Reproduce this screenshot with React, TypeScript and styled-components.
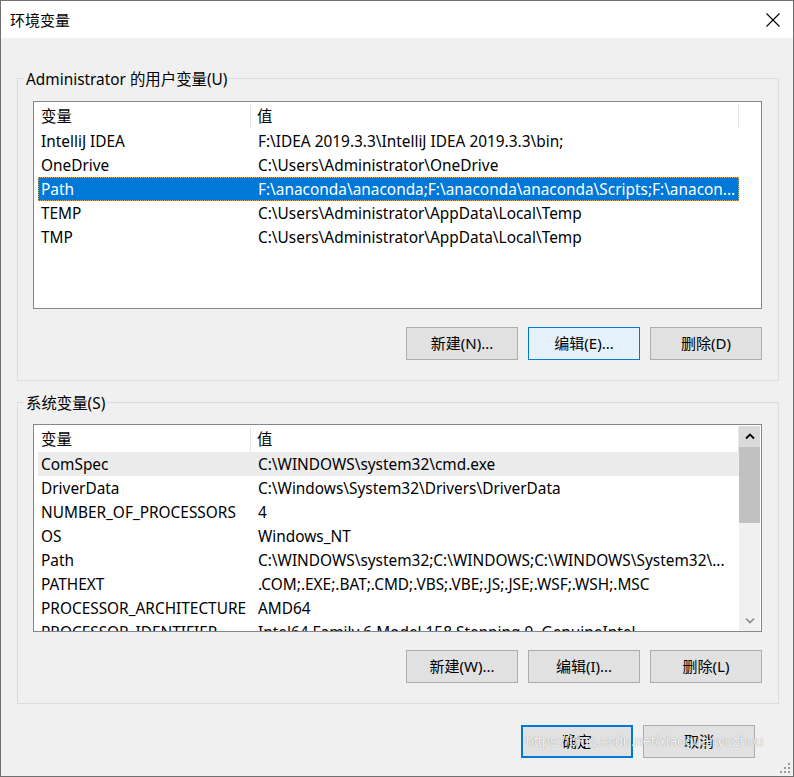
import React from "react";
import styled, { createGlobalStyle } from "styled-components";

const FONT = `"Noto Sans", "Noto Sans CJK SC", sans-serif`;

const Global = createGlobalStyle`
  html, body { margin: 0; padding: 0; background: #f0f0f0; }
  body { font-family: ${FONT}; color: #000; }
  * { box-sizing: border-box; }
`;

const Window = styled.div`
  position: relative;
  width: 794px;
  height: 777px;
  border: 1px solid #707070;
  background: #f0f0f0;
  display: flex;
  flex-direction: column;
  overflow: hidden;
  font-size: 15.4px;
`;

const TitleBar = styled.div`
  height: 37px;
  flex: none;
  background: #fff;
  display: flex;
  align-items: center;
  justify-content: space-between;
  padding: 0 13px 0 9px;
  font-size: 15px;
`;

const Title = styled.span`
  line-height: 20px;
`;

const Body = styled.div`
  display: flex;
  flex-direction: column;
  padding: 0 14px 0 16px;
`;

const Group = styled.fieldset<{ $top: number; $padTop: number }>`
  margin: ${(p) => p.$top}px 0 0 0;
  min-width: 0;
  border: 1px solid #dcdcdc;
  padding: ${(p) => p.$padTop}px 16px 20px 15px;
  display: flex;
  flex-direction: column;
`;

const Legend = styled.legend`
  margin-left: -9px;
  padding: 0 2px;
  line-height: 23px;
  height: 20px;
  font-size: 15.4px;
`;

const ListBox = styled.div<{ $height: number }>`
  height: ${(p) => p.$height}px;
  border: 1px solid #828790;
  background: #fff;
  display: flex;
  overflow: hidden;
`;

const Table = styled.div`
  width: 705px;
  flex: none;
  padding-left: 4px;
  display: flex;
  flex-direction: column;
`;

const HeaderRow = styled.div`
  height: 27px;
  flex: none;
  display: flex;
  align-items: stretch;
  padding-top: 2px;
`;

const HeaderCell = styled.div<{ $w: number; $pl: number }>`
  width: ${(p) => p.$w}px;
  padding-left: ${(p) => p.$pl}px;
  border-right: 1px solid #e5e5e5;
  display: flex;
  align-items: center;
  line-height: 20px;
`;

const Row = styled.div<{ $state?: "selected" | "hover" }>`
  height: 24px;
  flex: none;
  display: flex;
  align-items: center;
  padding-top: 1px;
  white-space: nowrap;
  background: ${(p) =>
    p.$state === "selected" ? "#0078d7" : p.$state === "hover" ? "#ececec" : "transparent"};
  color: ${(p) => (p.$state === "selected" ? "#fff" : "#000")};
  border: 1px dotted ${(p) => (p.$state === "selected" ? "#e8a040" : "transparent")};
`;

const Cell = styled.div<{ $w: number; $pl: number }>`
  width: ${(p) => p.$w}px;
  padding-left: ${(p) => p.$pl}px;
  overflow: hidden;
  white-space: nowrap;
  line-height: 20px;
  flex: none;
`;

const ScrollBar = styled.div`
  width: 21px;
  flex: none;
  margin: 1px 1px 0 0;
  background: #f0f0f0;
  display: flex;
  flex-direction: column;
`;

const ScrollArrow = styled.div<{ $dark?: boolean }>`
  height: 21px;
  flex: none;
  display: flex;
  align-items: center;
  justify-content: center;
  background: ${(p) => (p.$dark ? "#dadada" : "#f0f0f0")};
`;

const ScrollTrack = styled.div`
  flex: 1;
  display: flex;
  flex-direction: column;
`;

const Thumb = styled.div`
  height: 76px;
  background: #c1c1c1;
`;

const ButtonRow = styled.div<{ $mt: number; $pr?: number }>`
  display: flex;
  justify-content: flex-end;
  gap: 10px;
  margin-top: ${(p) => p.$mt}px;
  padding-right: ${(p) => p.$pr ?? 0}px;
`;

const Button = styled.button<{ $variant?: "hot" | "default" }>`
  width: 112px;
  height: 33px;
  font-family: ${FONT};
  font-size: 15px;
  color: #000;
  padding: 0 0 2px 0;
  background: ${(p) => (p.$variant === "hot" ? "#e5f1fb" : "#e1e1e1")};
  border: ${(p) =>
    p.$variant === "hot"
      ? "1px solid #0078d7"
      : p.$variant === "default"
      ? "2px solid #0078d7"
      : "1px solid #adadad"};
  line-height: 20px;
`;

const Watermark = styled.div`
  position: absolute;
  left: 525px;
  top: 732px;
  font-family: "Liberation Sans", Arial, sans-serif;
  font-size: 14.4px;
  color: rgba(255, 255, 255, 0.92);
  text-shadow: 0 0 1px rgba(0, 0, 0, 0.45);
  pointer-events: none;
  white-space: nowrap;
`;

const Grip = styled.svg`
  position: absolute;
  right: 3px;
  bottom: 3px;
`;

type Item = { name: string; value: string; state?: "selected" | "hover" };

const userVars: Item[] = [
  { name: "IntelliJ IDEA", value: "F:\\IDEA 2019.3.3\\IntelliJ IDEA 2019.3.3\\bin;" },
  { name: "OneDrive", value: "C:\\Users\\Administrator\\OneDrive" },
  {
    name: "Path",
    value: "F:\\anaconda\\anaconda;F:\\anaconda\\anaconda\\Scripts;F:\\anacon...",
    state: "selected",
  },
  { name: "TEMP", value: "C:\\Users\\Administrator\\AppData\\Local\\Temp" },
  { name: "TMP", value: "C:\\Users\\Administrator\\AppData\\Local\\Temp" },
];

const sysVars: Item[] = [
  { name: "ComSpec", value: "C:\\WINDOWS\\system32\\cmd.exe", state: "hover" },
  { name: "DriverData", value: "C:\\Windows\\System32\\Drivers\\DriverData" },
  { name: "NUMBER_OF_PROCESSORS", value: "4" },
  { name: "OS", value: "Windows_NT" },
  { name: "Path", value: "C:\\WINDOWS\\system32;C:\\WINDOWS;C:\\WINDOWS\\System32\\..." },
  { name: "PATHEXT", value: ".COM;.EXE;.BAT;.CMD;.VBS;.VBE;.JS;.JSE;.WSF;.WSH;.MSC" },
  { name: "PROCESSOR_ARCHITECTURE", value: "AMD64" },
  { name: "PROCESSOR_IDENTIFIER", value: "Intel64 Family 6 Model 158 Stepping 9, GenuineIntel" },
];

const VarTable: React.FC<{ items: Item[] }> = ({ items }) => (
  <Table>
    <HeaderRow>
      <HeaderCell $w={213} $pl={3}>变量</HeaderCell>
      <HeaderCell $w={488} $pl={6}>值</HeaderCell>
    </HeaderRow>
    {items.map((it, i) => (
      <Row key={i} $state={it.state}>
        <Cell $w={212} $pl={2}>{it.name}</Cell>
        <Cell $w={487} $pl={7}>{it.value}</Cell>
      </Row>
    ))}
  </Table>
);

const CloseIcon = () => (
  <svg width="14" height="14" viewBox="0 0 14 14">
    <path d="M0.5 0.5 L13.5 13.5 M13.5 0.5 L0.5 13.5" stroke="#000" strokeWidth="1.1" fill="none" />
  </svg>
);

const UpChevron = () => (
  <svg width="10" height="7" viewBox="0 0 10 7">
    <path d="M1 5.5 L5 1.5 L9 5.5" stroke="#000" strokeWidth="1.8" fill="none" />
  </svg>
);

const DownChevron = () => (
  <svg width="10" height="7" viewBox="0 0 10 7">
    <path d="M1 1.5 L5 5.5 L9 1.5" stroke="#8a8a8a" strokeWidth="1.6" fill="none" />
  </svg>
);

export default function App() {
  return (
    <>
      <Global />
      <Window>
        <TitleBar>
          <Title>环境变量</Title>
          <CloseIcon />
        </TitleBar>
        <Body>
          <Group $top={30} $padTop={13}>
            <Legend>Administrator 的用户变量(U)</Legend>
            <ListBox $height={208}>
              <VarTable items={userVars} />
            </ListBox>
            <ButtonRow $mt={18}>
              <Button>新建(N)...</Button>
              <Button $variant="hot">编辑(E)...</Button>
              <Button>删除(D)</Button>
            </ButtonRow>
          </Group>
          <Group $top={11} $padTop={12}>
            <Legend>系统变量(S)</Legend>
            <ListBox $height={208}>
              <VarTable items={sysVars} />
              <ScrollBar>
                <ScrollArrow $dark>
                  <UpChevron />
                </ScrollArrow>
                <ScrollTrack>
                  <Thumb />
                </ScrollTrack>
                <ScrollArrow>
                  <DownChevron />
                </ScrollArrow>
              </ScrollBar>
            </ListBox>
            <ButtonRow $mt={18}>
              <Button>新建(W)...</Button>
              <Button>编辑(I)...</Button>
              <Button>删除(L)</Button>
            </ButtonRow>
          </Group>
          <ButtonRow $mt={21} $pr={24}>
            <Button $variant="default">确定</Button>
            <Button>取消</Button>
          </ButtonRow>
        </Body>
        <Watermark>https://blog.csdn.net/xiaoguanyuzhou</Watermark>
        <Grip width="10" height="10" viewBox="0 0 10 10">
          <g fill="#9a9a9a">
            <rect x="8" y="0" width="2" height="2" />
            <rect x="4" y="4" width="2" height="2" />
            <rect x="8" y="4" width="2" height="2" />
            <rect x="0" y="8" width="2" height="2" />
            <rect x="4" y="8" width="2" height="2" />
            <rect x="8" y="8" width="2" height="2" />
          </g>
        </Grip>
      </Window>
    </>
  );
}
